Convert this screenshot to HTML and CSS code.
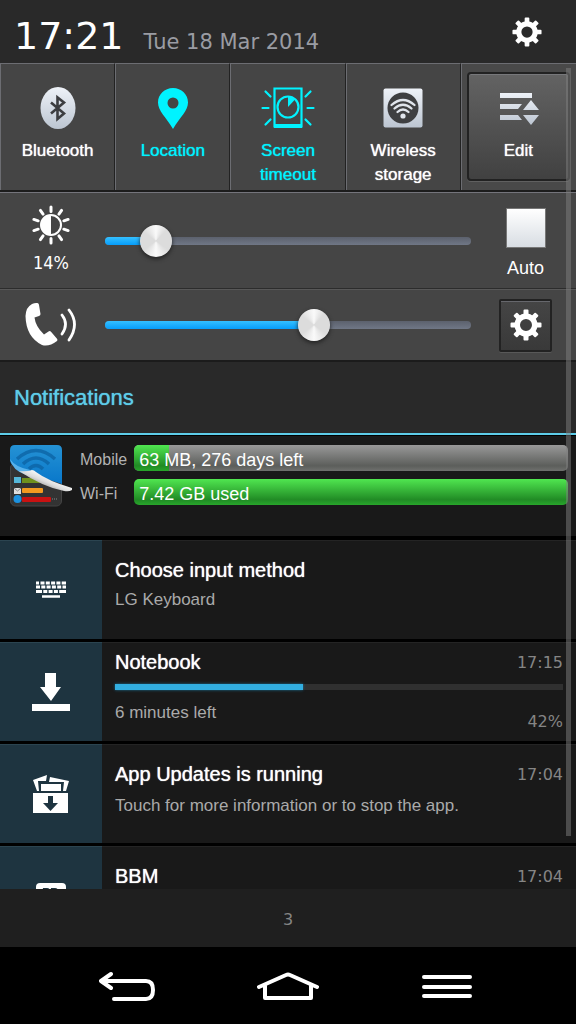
FILE: index.html
```html
<!DOCTYPE html>
<html lang="en">
<head>
<meta charset="utf-8">
<meta name="viewport" content="width=device-width, initial-scale=1">
<title>Notifications</title>
<link rel="stylesheet" href="styles.css">
</head>
<body>
<svg class="defs" aria-hidden="true">
  <defs>
    <linearGradient id="silver" x1="0" y1="0" x2="0" y2="1"><stop offset="0" stop-color="#eef2f8"/><stop offset="1" stop-color="#bcc5d1"/></linearGradient>
    <linearGradient id="sheet" x1="0" y1="0" x2="0" y2="1"><stop offset="0" stop-color="#2592d4"/><stop offset="1" stop-color="#0877ca"/></linearGradient>
    <linearGradient id="curl" gradientUnits="userSpaceOnUse" x1="34" y1="28" x2="28" y2="42"><stop offset="0" stop-color="#ffffff"/><stop offset="0.5" stop-color="#dcdcdc"/><stop offset="1" stop-color="#8a8a8a"/></linearGradient>
    <symbol id="gear" viewBox="0 0 32 32">
      <g fill="currentColor">
        <path fill-rule="evenodd" d="M16 4.500a11.500 11.500 0 1 0 0 23a11.500 11.500 0 0 0 0-23zM16 10a6 6 0 1 1 0 12a6 6 0 0 1 0-12z"/>
        <path id="teeth" d="M13.500 6V1.500q0-1 1-1h3q1 0 1 1V6zM13.500 26v4.500q0 1 1 1h3q1 0 1-1V26zM6 13.500H1.500q-1 0-1 1v3q0 1 1 1H6zM26 13.500h4.500q1 0 1 1v3q0 1-1 1H26z"/>
        <use href="#teeth" transform="rotate(45 16 16)"/>
      </g>
    </symbol>
  </defs>
</svg>
<div class="shade">
  <header class="status">
    <time class="clock">17:21</time>
    <span class="date">Tue 18 Mar 2014</span>
    <button class="settings" aria-label="Settings"><svg width="30" height="30"><use href="#gear"/></svg></button>
  </header>

  <main class="panel">
    <nav class="tiles">
      <button class="tile">
        <svg class="tile-icon" viewBox="0 0 54 44"><ellipse cx="27" cy="22" rx="17.500" ry="21" fill="url(#silver)"/><path d="M20 16.500l13 11-6.500 5.500V11.500l6.500 5-13 11" fill="none" stroke="#3c3d40" stroke-width="2.600"/></svg>
        <span>Bluetooth</span>
      </button>
      <button class="tile on">
        <svg class="tile-icon" viewBox="0 0 54 44"><path fill="currentColor" fill-rule="evenodd" d="M27 2c8.500 0 15 6.500 15 14.500C42 25 34 31 27 43C20 31 12 25 12 16.500C12 8.500 18.500 2 27 2zM27 11.500a5.500 5.500 0 1 0 0 11a5.500 5.500 0 0 0 0-11z"/></svg>
        <span>Location</span>
      </button>
      <button class="tile on">
        <svg class="tile-icon" viewBox="0 0 54 44"><g fill="none" stroke="currentColor" stroke-width="2.200"><path d="M13.500 2.500h27v38h-27z"/><circle cx="27" cy="21" r="10.500"/><path stroke-width="4" d="M13 40h28"/><path d="M1.500 22h6M46.500 22h6M4.500 5.500l5 5M49.500 5.500l-5 5M4.500 38.500l5-5M49.500 38.500l-5-5" stroke-linecap="round"/></g><path fill="currentColor" d="M27 21V10.500q5 0 7 3z"/></svg>
        <span>Screen timeout</span>
      </button>
      <button class="tile">
        <svg class="tile-icon" viewBox="0 0 54 44"><rect x="7.500" y="2.500" width="39" height="39" rx="2" fill="url(#silver)"/><circle cx="27" cy="22" r="15.500" fill="#3e3f41"/><g fill="none" stroke="#e0e5ec" stroke-width="2.300" stroke-linecap="round"><path d="M15.500 19q11.500-10 23 0M18.500 22.500q8.500-7.500 17 0M21.500 26q5.500-5 11 0"/></g><circle cx="27" cy="30" r="2.600" fill="#e0e5ec"/></svg>
        <span>Wireless storage</span>
      </button>
      <div class="edit-cell">
        <button class="tile edit">
          <svg class="tile-icon" viewBox="0 0 54 44"><path fill="url(#silver)" d="M9 7h32v5H9zM9 18h22l-4 5H9zM9 29h18l4 5H9zM32 24l8-10 8 10zM32 29h16l-8 10z"/></svg>
          <span>Edit</span>
        </button>
      </div>
    </nav>

    <section class="control brightness">
      <label class="control-label" for="brightness">
        <svg width="42" height="42" viewBox="0 0 42 42"><circle cx="21" cy="21" r="10" fill="none" stroke="#fff" stroke-width="2"/><path fill="#fff" d="M21 11a10 10 0 0 0 0 20z"/><g stroke="#fff" stroke-width="3" stroke-linecap="round"><path id="rays" d="M21 3v4.500M21 34.500V39"/><use href="#rays" transform="rotate(36 21 21)"/><use href="#rays" transform="rotate(72 21 21)"/><use href="#rays" transform="rotate(108 21 21)"/><use href="#rays" transform="rotate(144 21 21)"/></g></svg>
        <span>14%</span>
      </label>
      <div class="slider"><div class="fill" style="width:14%"></div><input id="brightness" type="range" min="0" max="100" value="14"></div>
      <label class="auto"><input type="checkbox"><span>Auto</span></label>
    </section>

    <section class="control volume">
      <label class="control-label" for="volume" aria-label="Call volume">
        <svg width="54" height="46" viewBox="0 0 54 46"><path fill="#fff" d="M8 2Q11 .5 13.500 1q1.500.500 1.500 2l1.500 9q0 1.500-1.500 2l-4.500 1.500q1 9 9.500 17l4.500-3q1.500-1 2.500.300l6 7q1 1.200 0 2.200Q25 45 18 43Q2 35 1.500 14Q2 5 8 2z"/><path d="M38 13q7 9 0 19M45 8q11 14 0 30" fill="none" stroke="#fff" stroke-width="2.800" stroke-linecap="round"/></svg>
      </label>
      <div class="slider"><div class="fill" style="width:57%"></div><input id="volume" type="range" min="0" max="100" value="57"></div>
      <button class="sound" aria-label="Sound settings"><svg width="32" height="32"><use href="#gear"/></svg></button>
    </section>

    <h1 class="heading">Notifications</h1>

    <div class="list">
      <article class="usage">
        <svg class="usage-icon" viewBox="0 0 62 62">
          <rect x=".5" y="18" width="51" height="43" rx="5" fill="#333333" stroke="#444444"/>
          <rect x="4" y="32" width="7" height="6" fill="#55b7d9"/><rect x="12" y="33" width="24" height="5" fill="#6f911d"/>
          <rect x="4" y="43" width="7" height="6" fill="#dddddd"/><path d="M4 43l3.500 3 3.500-3" fill="none" stroke="#888888"/><rect x="12" y="43" width="21" height="5" rx="1" fill="#f39a20"/>
          <circle cx="7.500" cy="54" r="4" fill="#1c91df"/><rect x="12" y="52" width="29" height="5" rx="1" fill="#c91212"/><path d="M42 54h6" stroke="#888888" stroke-dasharray="1 1"/>
          <path fill="url(#sheet)" d="M5 0h42q5 0 5 5v34L21 29Q2 23 0 16V5q0-5 5-5z"/>
          <g fill="none" stroke="#0c64a5" stroke-width="3.500" opacity=".8"><path d="M7 14q19-17 38 0M13 19q13-12 26 0M19 24q7-7 14 0"/></g>
          <path fill="#57b2ec" d="M0 14Q5 22 20 25l-4 5Q2 25 0 14z"/>
          <path fill="url(#curl)" d="M9 26q8 1 13-1q2 0 4 2q12 9 36 16v2q-3 2-8 1Q33 42 9 26z"/>
        </svg>
        <dl class="meters">
          <dt>Mobile</dt>
          <dd class="meter"><div class="meter-fill" style="width:8%"></div><span>63 MB, 276 days left</span></dd>
          <dt>Wi-Fi</dt>
          <dd class="meter"><div class="meter-fill" style="width:100%"></div><span>7.42 GB used</span></dd>
        </dl>
      </article>

      <article class="item">
        <div class="item-icon"><svg width="32" height="18" viewBox="0 0 32 18"><g stroke="#fff" stroke-width="3" fill="none"><path d="M1 2h30" stroke-dasharray="3 1.500 4 1.300 4 1.300 4 1.300 4 1.300 6 1"/><path d="M1 6h30" stroke-dasharray="4 1.300"/><path d="M1 10.500h30" stroke-dasharray="6 1.300 4 1.300 4 1.300 4 1.300 8 1"/><path d="M7 15.500h18" stroke-width="2.500"/></g></svg></div>
        <div class="item-body"><h2>Choose input method</h2><p>LG Keyboard</p></div>
      </article>

      <article class="item download">
        <div class="item-icon"><svg width="38" height="40" viewBox="0 0 38 40"><path fill="#fff" d="M13 1h11v14h5L19 29 8 15h5zM0 32h38v7H0z"/></svg></div>
        <div class="item-body">
          <h2>Notebook</h2><time>17:15</time>
          <div class="progress" role="progressbar" aria-label="Download" aria-valuenow="42"><div class="progress-fill" style="width:42%"></div></div>
          <p>6 minutes left</p><span class="percent">42%</span>
        </div>
      </article>

      <article class="item">
        <div class="item-icon"><svg width="36" height="40" viewBox="0 0 36 40"><path fill="#fff" fill-rule="evenodd" d="M0 19h35v20H0zM15 22v7h-5l7.500 8 7.500-8h-5v-7z"/><path fill="#fff" d="M8 10h20v7H8zM0 6l14-5-1 6H5l1 10H4zM17 3l19 4-3 10h-3l1-9H16z"/></svg></div>
        <div class="item-body"><h2>App Updates is running</h2><time>17:04</time><p>Touch for more information or to stop the app.</p></div>
      </article>

      <article class="item">
        <div class="item-icon"><svg width="30" height="26" viewBox="0 0 30 26"><rect width="30" height="25" rx="4" fill="#fff"/><path fill="#1e3440" d="M7 5h4q3 0 3 3t-3 3H6zM15 5h4q3 0 3 3t-3 3h-5zM7 14h4q3 0 3 3t-3 3H6zM15 14h4q3 0 3 3t-3 3h-5z"/></svg></div>
        <div class="item-body"><h2>BBM</h2><time>17:04</time></div>
      </article>
    </div>
    <div class="scrollbar"></div>
  </main>

  <footer class="count">3</footer>
  <nav class="keys">
    <button aria-label="Back"><svg width="56" height="30" viewBox="0 0 56 30"><path d="M12 3L2 10l10 7M2 10h45q7 0 7 9t-7 9H15"/></svg></button>
    <button aria-label="Home"><svg width="62" height="30" viewBox="0 0 62 30"><path d="M2 16L29 4q2-1 4 0l27 12M8 14v13h46V14"/></svg></button>
    <button aria-label="Menu"><svg width="52" height="30" viewBox="0 0 52 30"><path d="M3 6h46M3 16h46M3 25h46"/></svg></button>
  </nav>
</div>
</body>
</html>
```
FILE: styles.css
```css
* { box-sizing: border-box; }
body { margin: 0; background: #000; color: #fff; font-family: "Liberation Sans", sans-serif; }
button { padding: 0; border: 0; background: none; color: inherit; font: inherit; cursor: pointer; }
svg { display: block; flex-shrink: 0; }
.defs { position: absolute; width: 0; height: 0; }
h1, h2, p, dl, dd { margin: 0; font-weight: 400; }

.shade { display: flex; flex-direction: column; height: 100vh; }
.status { display: flex; align-items: baseline; gap: 20px; height: 63px; padding: 14px 34px 0 14px; background: #292929; flex-shrink: 0; }
.clock { font: 38px/44px "DejaVu Sans", sans-serif; }
.date { color: #9a9ca3; font: 21px/44px "DejaVu Sans", sans-serif; white-space: nowrap; }
.settings { align-self: flex-start; margin: 3px 0 0 auto; }

.panel { position: relative; display: flex; flex-direction: column; flex: 1; min-height: 0; }
.tiles { display: grid; grid-template-columns: repeat(5, 1fr); height: 129px; flex-shrink: 0; border-bottom: 2px solid #1c1c1c; background: #454545; }
.tile { display: flex; flex-direction: column; align-items: center; gap: 9px; padding: 22px 14px 0; border-top: 1px solid #6c6d72; border-left: 1px solid #6c6d72; border-right: 1px solid #222; font-size: 17px; line-height: 24px; text-shadow: 0 0 1px currentColor; }
.tile-icon { width: 54px; height: 44px; }
.on { color: #00f3ff; }
.edit-cell { display: flex; padding: 8px 6px 9px 5px; border-top: 1px solid #6c6d72; border-left: 1px solid #6c6d72; background: #494949; }
.edit { flex: 1; padding: 12px 0 0; border: 2px solid #222; border-radius: 4px; background: linear-gradient(#636363, #414141); box-shadow: inset 0 1px #77787b, 0 1px #606060; }

.control { display: flex; align-items: center; padding: 0 24px 0 0; background: #454545; border-top: 1px solid #74747b; flex-shrink: 0; }
.control-label { display: flex; flex-direction: column; align-items: center; width: 105px; padding-right: 3px; font: 18px/22px "DejaVu Sans Condensed", "DejaVu Sans", sans-serif; }
.brightness { height: 97px; border-bottom: 1px solid #2c2c2c; }
.brightness .control-label { gap: 6px; padding-bottom: 3px; }
.volume { height: 73px; border-top-color: #585858; border-bottom: 2px solid #1b1b1b; }
.slider { position: relative; flex: 1; height: 8px; border-radius: 4px; background: linear-gradient(#5c616d, #707786); }
.fill { height: 8px; border-radius: 4px 0 0 4px; background: linear-gradient(#35c0ff, #069dfa); }
.slider input { position: absolute; top: -12px; left: -16px; width: calc(100% + 32px); height: 32px; margin: 0; background: none; -webkit-appearance: none; appearance: none; }
.slider input::-webkit-slider-thumb { -webkit-appearance: none; width: 32px; height: 32px; border-radius: 50%; background: conic-gradient(#fafafa, #dcdcdc 12%, #dcdcdc 35%, #fafafa 50%, #dcdcdc 65%, #dcdcdc 85%, #fafafa); box-shadow: 0 2px 4px #222; }
.auto, .sound { margin-left: 28px; }
.auto { display: flex; flex-direction: column; align-items: center; gap: 8px; width: 53px; padding-top: 6px; font-size: 18px; line-height: 24px; }
.auto input { width: 40px; height: 40px; margin: 0; border: 1px solid #777; background: linear-gradient(#fff, #d8dde3); -webkit-appearance: none; appearance: none; }
.auto input:checked { background: #00bfff; }
.sound { display: grid; place-items: center; width: 53px; height: 53px; border: 2px solid #222; border-radius: 2px; background: linear-gradient(#454545, #393939); box-shadow: inset 0 1px #66676c, 0 1px #585858; }

.heading { padding: 20px 14px 19px; background: #292929; border-bottom: 2px solid #5dcce8; color: #5dcce8; font-size: 22px; line-height: 32px; text-shadow: 0 0 1px currentColor; flex-shrink: 0; }
.list { flex: 1; min-height: 0; overflow: hidden; background: #000; }
.usage { display: flex; gap: 8px; height: 102px; padding: 9px 8px 0 10px; background: #191919; border-top: 1px solid #000; border-bottom: 1px solid #000; }
.usage-icon { width: 62px; height: 62px; }
.meters { display: grid; grid-template-columns: auto 1fr; grid-auto-rows: 26px; gap: 8px 7px; flex: 1; font-size: 18px; line-height: 30px; }
.meters dt { color: #b3b3b3; font-size: 16px; }
.meter { position: relative; overflow: hidden; border-radius: 5px; background: linear-gradient(#999, #5c5e5b 80%, #6f706e); }
.meter-fill { height: 100%; background: linear-gradient(#50e650, #218b25 80%, #28a62b); }
.meter span { position: absolute; left: 5px; top: 0; }

.item { display: flex; height: 102px; border-top: 3px solid #000; background: #191919; }
.item-icon { display: grid; place-items: center; width: 102px; background: #1e3440; flex-shrink: 0; box-shadow: inset 0 1px #2b4450; }
.item-body { flex: 1; display: grid; grid-template-columns: 1fr auto; align-content: start; padding: 15px 13px 0; box-shadow: inset 0 1px #242424; line-height: 30px; }
.item h2 { grid-column: 1; font-size: 20px; line-height: 30px; text-shadow: 0 0 1px #fff; }
.item p { grid-column: 1; color: #aaa; font-size: 17px; }
.item time, .percent { color: #858585; font: 16px/32px "DejaVu Sans", sans-serif; }
.download .item-body { padding-top: 5px; }
.progress { grid-column: 1 / -1; height: 6px; margin: 5px 0 8px; background: #303030; }
.progress-fill { height: 100%; background: #32aee0; box-shadow: 0 0 3px #1c7499; }
.percent { padding-top: 8px; text-align: right; }
.scrollbar { position: absolute; top: 5px; right: 5px; width: 5px; height: 93%; background: #808080; opacity: .5; pointer-events: none; }

.count { height: 58px; flex-shrink: 0; background: #1f1f1f; color: #858585; font: 16px/62px "DejaVu Sans", sans-serif; text-align: center; }
.keys { display: flex; justify-content: center; gap: 102px; height: 77px; padding-right: 4px; flex-shrink: 0; background: #000; }
.keys svg { fill: none; stroke: #fff; stroke-width: 4px; stroke-linecap: round; stroke-linejoin: round; }
```
